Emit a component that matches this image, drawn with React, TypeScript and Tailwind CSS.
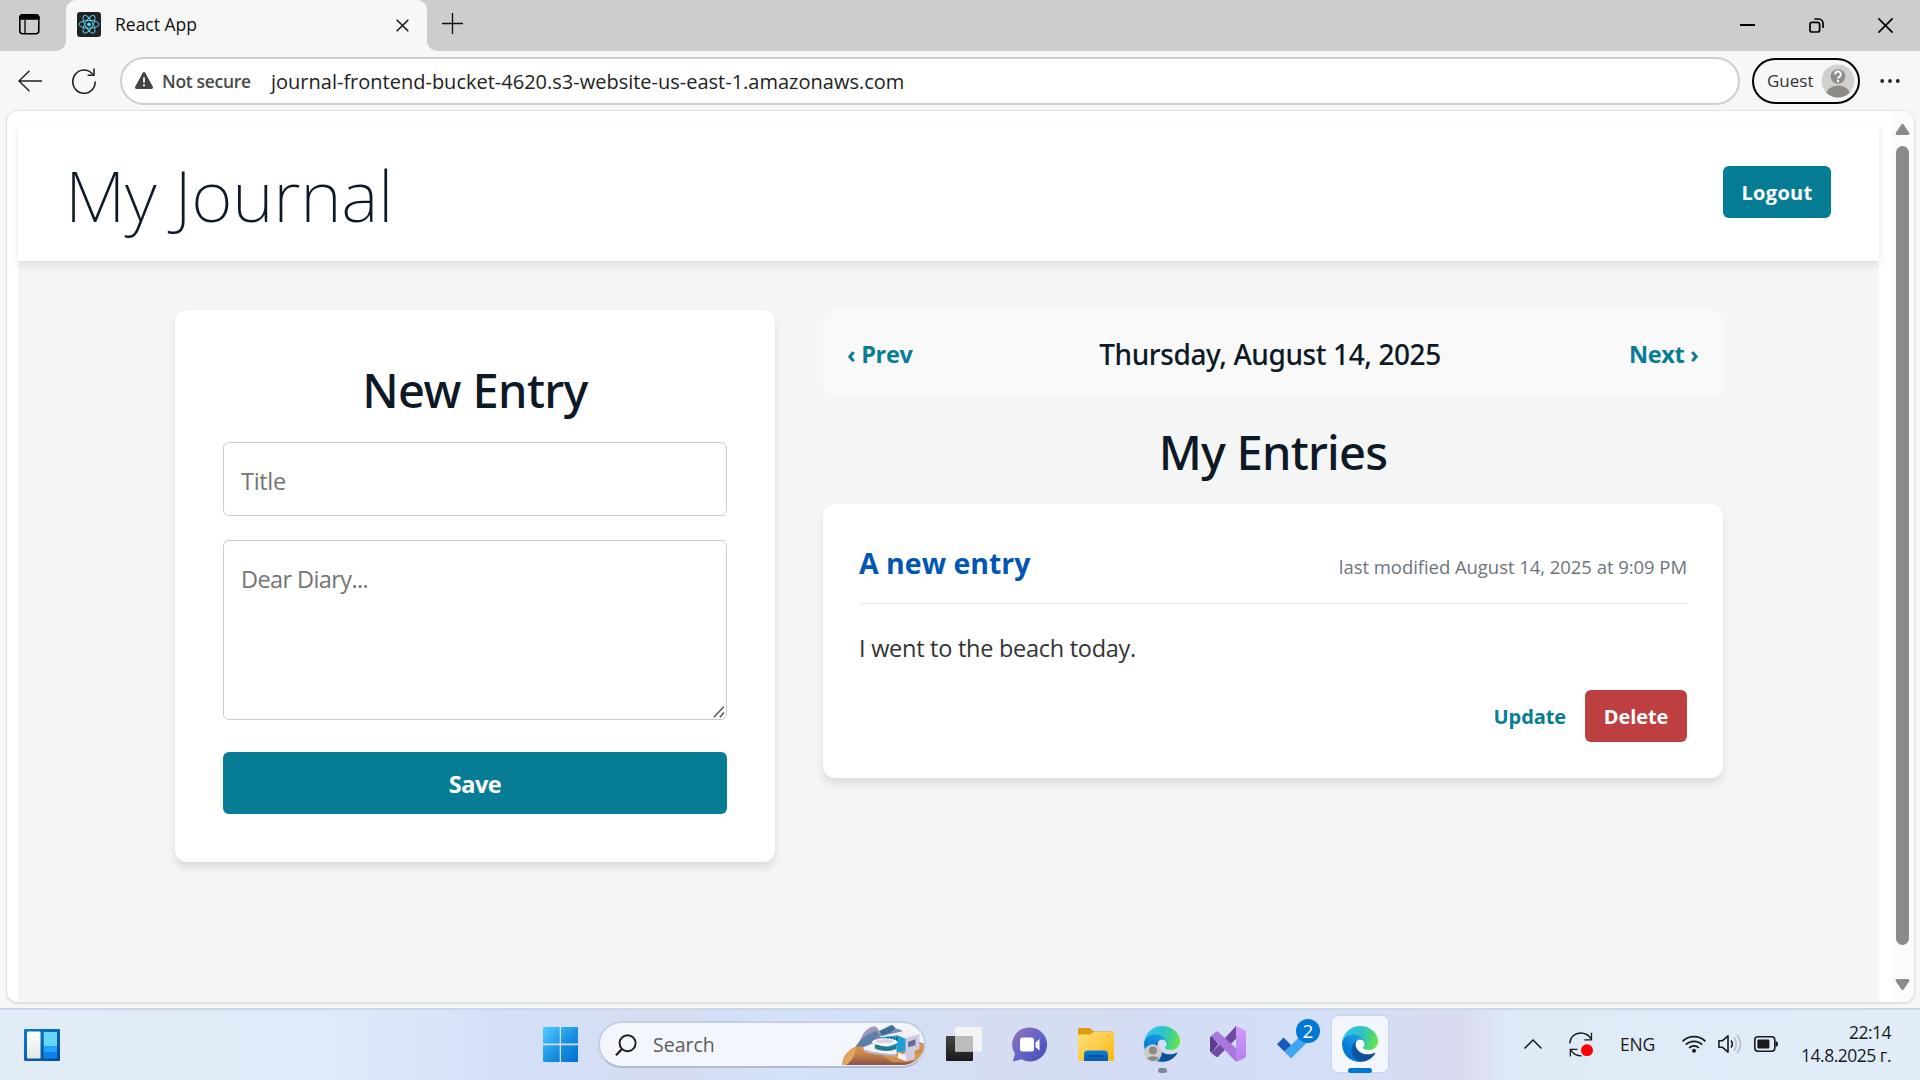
import type { ReactNode } from "react";

function ReactLogo() {
  return (
    <svg viewBox="0 0 24 25" className="h-[25px] w-6">
      <rect width="24" height="25" rx="3" fill="#222" />
      <g fill="none" stroke="#61dafb" strokeWidth="0.9" transform="translate(12 12.3)">
        <ellipse rx="10" ry="3.9" />
        <ellipse rx="10" ry="3.9" transform="rotate(60)" />
        <ellipse rx="10" ry="3.9" transform="rotate(120)" />
        <circle r="1.9" fill="#61dafb" stroke="none" />
      </g>
    </svg>
  );
}

function TabStrip() {
  return (
    <div className="flex h-[51px] shrink-0 bg-[#f7f7f7]">
      <div className="w-[66px] rounded-br-[10px] bg-[#cdcdcd] pt-[13px] pl-[18px]">
        <svg viewBox="0 0 22 22" className="size-[22px]" fill="none" stroke="#000" strokeWidth="1.6">
          <rect x="1.8" y="1.8" width="19" height="19" rx="3" />
          <path d="M2 4.5a2.6 2.6 0 0 1 2.6-2.6h13.6a2.6 2.6 0 0 1 2.6 2.6V6H2z" fill="#000" />
          <path d="M7 6.5v14" strokeWidth="1.3" />
        </svg>
      </div>
      <div className="w-[361px] bg-[#cdcdcd]">
        <div className="flex h-full items-center rounded-t-[10px] bg-[#f7f7f7] pr-[18px] pb-[2px] pl-[11px]">
          <ReactLogo />
          <span className="ml-[14px] flex-1 text-[17.5px] text-[#111]">React App</span>
          <svg viewBox="0 0 13 13" className="mt-[2px] size-[13px]" stroke="#111" strokeWidth="1.5">
            <path d="M.7.7l11.6 11.6M12.3.7L.7 12.3" />
          </svg>
        </div>
      </div>
      <div className="flex flex-1 rounded-bl-[10px] bg-[#cdcdcd] pl-[15px]">
        <svg viewBox="0 0 22 22" className="mt-[13px] size-[21px]" stroke="#111" strokeWidth="1.4">
          <path d="M11 0v22M0 11h22" />
        </svg>
        <div className="ml-auto flex gap-[54px] pt-[18px] pr-[27px]">
          <svg viewBox="0 0 15 15" className="size-[15px]">
            <path d="M0 7h15" stroke="#000" strokeWidth="2" />
          </svg>
          <svg viewBox="0 0 15 15" className="size-[15px]" fill="none" stroke="#000" strokeWidth="1.7">
            <rect x="1" y="4.4" width="9.6" height="9.6" rx="2" />
            <path d="M5.3 1h4.4A4.3 4.3 0 0 1 14 5.3v4.6" />
          </svg>
          <svg viewBox="0 0 15 15" className="size-[15px]" stroke="#000" strokeWidth="1.7">
            <path d="M.4.4l14.2 14.2M14.6.4L.4 14.6" />
          </svg>
        </div>
      </div>
    </div>
  );
}

function AddressBar() {
  return (
    <div className="flex h-[59px] shrink-0 items-center bg-[#f7f7f7]">
      <svg viewBox="0 0 24 22" className="ml-[18px] h-[22px] w-6" fill="none" stroke="#222" strokeWidth="1.5">
        <path d="M24 11H1M11.5.8L1 11l10.5 10.2" />
      </svg>
      <svg viewBox="0 0 24 26" className="mt-px ml-[30px] h-[26px] w-6" fill="none" stroke="#222" strokeWidth="1.6">
        <path d="M23.2 13.6A11.2 11.7 0 1 1 20.8 6.4" />
        <path d="M15.6 7.2h6.4V.6" />
      </svg>
      <div className="mt-px ml-6 flex h-12 w-[1620px] items-center rounded-full border-2 border-[#cfcfcf] bg-white pl-[13px]">
        <svg viewBox="0 0 18 17" className="-mt-[2px] h-[17px] w-[18px]">
          <path d="M7.6.9a1.6 1.6 0 0 1 2.8 0l7.3 13.6A1.6 1.6 0 0 1 16.3 17H1.7A1.6 1.6 0 0 1 .3 14.5z" fill="#444" />
          <path d="M9 5.2v5.6" stroke="#fff" strokeWidth="1.7" />
          <circle cx="9" cy="13.4" r="1.1" fill="#fff" />
        </svg>
        <span className="ml-[9px] w-[89px] text-[17.5px] font-semibold tracking-[-0.32px] whitespace-nowrap text-[#4a4a4a]">
          Not secure
        </span>
        <span className="ml-5 pt-px text-[20px] text-[#222]">
          journal-frontend-bucket-4620.s3-website-us-east-1.amazonaws.com
        </span>
      </div>
      <div className="ml-3 flex h-[46px] w-[108px] items-center justify-between rounded-full border-2 border-black pr-[3px] pl-[13px]">
        <span className="pt-px text-[17px] text-[#333]">Guest</span>
        <svg viewBox="0 0 34 34" className="size-[34px]">
          <defs>
            <clipPath id="guest">
              <circle cx="17" cy="17" r="16.5" />
            </clipPath>
          </defs>
          <circle cx="17" cy="17" r="16.5" fill="#d2d0cd" />
          <g clipPath="url(#guest)" fill="#8f8b88">
            <circle cx="17" cy="12.5" r="7.3" />
            <ellipse cx="17" cy="31" rx="12" ry="9.5" />
          </g>
          <path d="M14.2 10.4a2.8 2.8 0 1 1 4.2 2.3c-1 .6-1.4 1-1.4 2" fill="none" stroke="#fff" strokeWidth="1.9" />
          <circle cx="17" cy="17" r="1.2" fill="#fff" />
        </svg>
      </div>
      <svg viewBox="0 0 20 4" className="mt-px ml-[20px] h-1 w-5" fill="#222">
        <circle cx="2.2" cy="2" r="1.9" />
        <circle cx="10" cy="2" r="1.9" />
        <circle cx="17.8" cy="2" r="1.9" />
      </svg>
    </div>
  );
}

function NewEntryForm() {
  return (
    <form className="h-[552px] w-[600px] rounded-xl bg-white p-12 shadow-[0_6px_9px_rgba(0,0,0,0.1)]">
      <h2 className="h-[84px] text-center font-['Noto_Sans'] text-[47px] leading-[64px] font-medium tracking-[-0.6px]">
        New Entry
      </h2>
      <input
        placeholder="Title"
        className="block h-[74px] w-full rounded-md border border-[#ccc] px-[17px] pt-[3px] text-[23.5px] tracking-[-0.3px] placeholder:text-[#757575]"
      />
      <div className="relative mt-6 h-[180px]">
        <textarea
          placeholder="Dear Diary..."
          className="block h-full w-full resize-none rounded-md border border-[#ccc] px-[17px] pt-[21px] text-[23.5px] leading-[34px] tracking-[-0.6px] placeholder:text-[#757575]"
        />
        <svg viewBox="0 0 12 12" className="absolute right-[2px] bottom-[2px] size-3" stroke="#555" strokeWidth="1.5">
          <path d="M.8 11.2L10.8.8M6.8 11.2l4.2-4.6" />
        </svg>
      </div>
      <button className="mt-8 h-[62px] w-full rounded-md bg-[#067d95] pt-[3px] text-[23.5px] font-bold tracking-[-0.5px] text-white">
        Save
      </button>
    </form>
  );
}

function Entries() {
  return (
    <section className="w-[900px]">
      <nav className="flex h-[86px] items-center justify-between rounded-xl bg-[#f9f9f9] px-6 pt-[2px]">
        <button className="w-16 pt-[2px] text-left text-[23.5px] font-bold tracking-[-0.3px] whitespace-nowrap text-[#067d95]">
          ‹ Prev
        </button>
        <span className="font-['Noto_Sans'] text-[28px] font-medium tracking-[-0.4px]">Thursday, August 14, 2025</span>
        <button className="w-[70px] pt-[2px] text-left text-[23.5px] font-bold tracking-[-0.4px] whitespace-nowrap text-[#067d95]">
          Next ›
        </button>
      </nav>
      <h2 className="h-[108px] pt-[2px] text-center font-['Noto_Sans'] text-[47px] leading-[108px] font-medium tracking-[-0.75px]">
        My Entries
      </h2>
      <article className="h-[274px] rounded-xl bg-white px-9 pt-9 shadow-[0_6px_9px_rgba(0,0,0,0.1)]">
        <header className="flex h-16 items-baseline justify-between border-b border-[#e9ecef]">
          <h3 className="text-[28.5px] leading-[47px] font-bold text-[#0056b3]">A new entry</h3>
          <span className="text-[18.5px] tracking-[-0.05px] text-[#6c757d]">last modified August 14, 2025 at 9:09 PM</span>
        </header>
        <p className="mt-[26px] text-[23.5px] leading-[36px] tracking-[-0.27px] text-[#333]">I went to the beach today.</p>
        <div className="mt-6 flex justify-end">
          <button className="h-[52px] px-[19px] pt-[2px] text-[20px] font-bold tracking-[-0.1px] text-[#067d95]">Update</button>
          <button className="h-[52px] w-[102px] rounded-md bg-[#bd3f40] pt-[2px] text-[20px] font-bold tracking-[-0.1px] text-white">
            Delete
          </button>
        </div>
      </article>
    </section>
  );
}

function Page() {
  return (
    <div className="h-[898px] shrink-0 bg-[#f7f7f7] pr-[5px] pb-[5px] pl-[6px]">
      <div className="flex h-full overflow-hidden rounded-xl border border-[#e2e2e2] bg-white pt-[11px] pl-[11px] shadow-[0_1px_2px_rgba(0,0,0,0.12)]">
        <div className="flex w-[1861px] shrink-0 flex-col bg-[#f4f6f6] text-[#0d1926]">
          <header className="z-10 flex h-[139px] shrink-0 items-center justify-between bg-white px-12 shadow-[0_4px_8px_rgba(0,0,0,0.1)]">
            <h1 className="-ml-px pt-[5px] font-['Noto_Sans'] text-[71px] leading-none font-extralight tracking-[-0.3px]">
              My Journal
            </h1>
            <button className="h-[52px] w-[108px] rounded-md bg-[#067d95] pt-[2px] text-[20px] font-bold tracking-[0.3px] text-white">
              Logout
            </button>
          </header>
          <main className="flex gap-12 pt-[49px] pl-[157px]">
            <NewEntryForm />
            <Entries />
          </main>
        </div>
        <div className="-mt-[11px] ml-3 flex w-[23px] flex-col items-center bg-[#fbfbfb] pt-[13px] pb-[12px]">
          <svg viewBox="0 0 15 11" className="h-[11px] w-[15px] shrink-0" fill="#8b8b8b">
            <path d="M6.2.7a1.6 1.6 0 0 1 2.6 0l5.4 8a1.4 1.4 0 0 1-1.2 2.2H2A1.4 1.4 0 0 1 .8 8.7z" />
          </svg>
          <div className="mt-[11px] h-[799px] w-[13px] rounded-full bg-[#8b8b8b]" />
          <svg viewBox="0 0 15 11" className="mt-auto h-[11px] w-[15px] shrink-0 rotate-180" fill="#8b8b8b">
            <path d="M6.2.7a1.6 1.6 0 0 1 2.6 0l5.4 8a1.4 1.4 0 0 1-1.2 2.2H2A1.4 1.4 0 0 1 .8 8.7z" />
          </svg>
        </div>
      </div>
    </div>
  );
}

function EdgeIcon({ id }: { id: string }) {
  return (
    <svg viewBox="0 0 256 256" className="size-9">
      <defs>
        <linearGradient id={`${id}a`} x1="60" y1="180" x2="240" y2="180" gradientUnits="userSpaceOnUse">
          <stop offset="0" stopColor="#0c59a4" />
          <stop offset="1" stopColor="#114a8b" />
        </linearGradient>
        <linearGradient id={`${id}b`} x1="150" y1="80" x2="45" y2="210" gradientUnits="userSpaceOnUse">
          <stop offset="0" stopColor="#1b9de2" />
          <stop offset="0.3" stopColor="#1595df" />
          <stop offset="0.7" stopColor="#0680d7" />
          <stop offset="1" stopColor="#0078d4" />
        </linearGradient>
        <linearGradient id={`${id}c`} x1="20" y1="60" x2="255" y2="130" gradientUnits="userSpaceOnUse">
          <stop offset="0" stopColor="#35c1f1" />
          <stop offset="0.45" stopColor="#2cc3c8" />
          <stop offset="0.72" stopColor="#43d08c" />
          <stop offset="1" stopColor="#66eb3e" />
        </linearGradient>
      </defs>
      <g transform="translate(-4.63 -4.92)">
        <path fill={`url(#${id}a)`} d="M235.68 195.46a93.73 93.73 0 0 1-10.54 4.71 101.87 101.87 0 0 1-35.9 6.46c-47.32 0-88.54-32.55-88.54-74.32A31.48 31.48 0 0 1 117.13 105c-42.8 1.8-53.8 46.4-53.8 72.53 0 73.88 68.09 81.37 82.76 81.37 7.91 0 19.84-2.3 27-4.56l1.31-.44a128.34 128.34 0 0 0 66.6-52.8 4 4 0 0 0-5.32-5.64z" />
        <path fill={`url(#${id}b)`} d="M110.34 246.34A79.2 79.2 0 0 1 87.6 225a80.72 80.72 0 0 1 29.53-120c3.12-1.47 8.45-4.13 15.54-4a32.35 32.35 0 0 1 25.69 13 31.88 31.88 0 0 1 6.36 18.66c0-.21 24.46-79.6-80-79.6-43.9 0-80 41.66-80 78.21a130.15 130.15 0 0 0 12.11 56 128 128 0 0 0 156.38 67.11 75.55 75.55 0 0 1-62.78-8z" />
        <path fill={`url(#${id}c)`} d="M156.94 153.78c-.81 1.05-3.3 2.5-3.3 5.66 0 2.61 1.7 5.12 4.72 7.23 14.38 10 41.49 8.68 41.56 8.68a59.56 59.56 0 0 0 30.27-8.35 61.38 61.38 0 0 0 30.43-52.88c.26-22.41-8-37.31-11.34-43.91C228.09 28.76 182.35 4.92 132.61 4.92a128 128 0 0 0-128 126.2c.48-36.54 36.8-66.05 80-66.05 3.5 0 23.46.34 42 10.07 16.34 8.58 24.9 18.94 30.85 29.21 6.18 10.67 7.28 24.15 7.28 29.52s-2.74 13.33-7.8 19.91z" />
      </g>
    </svg>
  );
}

function SearchArt() {
  return (
    <svg viewBox="970 78 248 120" className="-mr-px h-10 w-[83px]">
      <defs>
        <linearGradient id="dune" x1="0" y1="0" x2="0" y2="1">
          <stop offset="0" stopColor="#e0a255" />
          <stop offset="0.5" stopColor="#c98445" />
          <stop offset="1" stopColor="#8a4f4c" />
        </linearGradient>
        <linearGradient id="peak" x1="0" y1="0" x2="1" y2="1">
          <stop offset="0" stopColor="#c9a3c4" />
          <stop offset="0.5" stopColor="#6f86b0" />
          <stop offset="1" stopColor="#5b7fae" />
        </linearGradient>
        <clipPath id="pillEnd">
          <path d="M970 70H1150A66 64 0 0 1 1150 198H970z" />
        </clipPath>
      </defs>
      <g clipPath="url(#pillEnd)">
        <path d="M1000 158c14-20 22-30 30-48 8-14 22-28 40-28l12 14 20-10 10-6 8-2 10 10 16 4 10 10 20 4 20 20 20 10v30z" fill="url(#peak)" />
        <path d="M1082 96l20-10 18-8 10 10-14 12-26 12z" fill="#3f6d94" />
        <path d="M1008 146c10-14 24-30 40-40l24-10 8 14-24 20-14 18z" fill="#4c7ba6" opacity=".75" />
        <path d="M970 198c2-24 14-42 38-54 40-6 60 12 90 14 50 2 80-20 120-26v66z" fill="url(#dune)" />
        <path d="M970 198c4-26 18-44 40-52 2 16-10 40-28 52z" fill="#e3a75c" />
        <path d="M1090 170c40-2 70 4 120-10l-10 20-30 10h-50z" fill="#e5a94f" opacity=".6" />
        <path d="M1088 110l74-14v60l-30 4-44-16z" fill="#1f9fd0" />
        <path d="M1104 114h32v14h-32z" fill="#12558f" />
        <path d="M1112 112v18M1121 112v18M1129 112v18" stroke="#7fd3f0" strokeWidth="2" />
        <path d="M1084 112l84-19 34 12-42 14-24-10-50 6z" fill="#f1eef6" />
        <path d="M1160 119l42-14v44l-14 8v24l-26 6-24-10 22-18z" fill="#cfcadd" />
        <path d="M1168 128l22-7v18l-22 6z" fill="#6a6d97" />
        <path d="M1138 160l24 10v16l-26-10z" fill="#f4f1f8" />
        <path d="M1034 144l32-12 66 10 2 24-22 2-50-8-28-8z" fill="#f2eff7" />
        <path d="M1036 152l30 8 66 8v5l-66-7-30-7z" fill="#b9b2cc" />
        <path d="M1068 132c16 12 48 14 64 4v14c-16 8-48 8-64-2z" fill="#1b7f90" />
        <ellipse cx="1098" cy="129" rx="38" ry="11" fill="#fbf9fd" />
        <ellipse cx="1098" cy="127" rx="28" ry="6" fill="#d8d2e6" />
      </g>
    </svg>
  );
}

function Cell({ children }: { children: ReactNode }) {
  return <div className="relative flex size-14 items-center justify-center">{children}</div>;
}

function Taskbar() {
  return (
    <footer className="flex h-[72px] shrink-0 border-t-2 border-[#cbd7e8] bg-[linear-gradient(90deg,#e2ecf6_0%,#dfebf9_17%,#d3e0f8_26%,#d6dcf2_35%,#d2e2f8_41%,#d6ddf2_52%,#d3dcf4_60%,#d3dff8_69%,#d9dbef_76%,#dfeaf7_79%,#e0edf9_100%)]">
      <div className="w-[532px] pt-[19px] pl-6">
        <svg viewBox="0 0 36 32" className="h-8 w-9">
          <defs>
            <linearGradient id="board" x1="0" y1="0" x2="1" y2="1">
              <stop offset="0" stopColor="#0a7ad2" />
              <stop offset="1" stopColor="#0a4a92" />
            </linearGradient>
            <linearGradient id="sheet" x1="0" y1="0" x2="0" y2="1">
              <stop offset="0" stopColor="#fff" />
              <stop offset="1" stopColor="#e6e6e6" />
            </linearGradient>
          </defs>
          <rect width="36" height="32" rx="1" fill="url(#board)" />
          <rect x="3" y="2.5" width="13.5" height="27" rx="1.2" fill="url(#sheet)" />
          <path d="M19.7 3H33v14H19.7z" fill="#66d8ff" />
          <path d="M19.7 17H33v6H19.7z" fill="#1fa5fb" />
          <path d="M19.7 23H33v6.5H19.7z" fill="#0a84ec" />
        </svg>
      </div>
      <div className="flex items-center gap-[10px] pb-[2px]">
        <Cell>
          <svg viewBox="0 0 35 35" className="size-[35px]">
            <defs>
              <linearGradient id="win" x1="0" y1="0" x2="35" y2="35" gradientUnits="userSpaceOnUse">
                <stop offset="0" stopColor="#4fcfff" />
                <stop offset="0.55" stopColor="#1b8fe0" />
                <stop offset="1" stopColor="#0070cf" />
              </linearGradient>
            </defs>
            <path d="M0 .8A.8.8 0 0 1 .8 0h15.9v16.6H0zM18 0h16.2a.8.8 0 0 1 .8.8v15.8H18zM0 18.2h16.7V35H.8a.8.8 0 0 1-.8-.8zM18 18.2h17v16a.8.8 0 0 1-.8.8H18z" fill="url(#win)" />
          </svg>
        </Cell>
        <div className="mt-px flex h-[47px] w-[328px] items-center rounded-full border-2 border-[#c5cfe4] border-b-[#b0bbcf] bg-[#f3f6fd] pl-[15px]">
          <svg viewBox="0 0 22 22" className="size-[22px]" fill="none" stroke="#1f1f1f" strokeWidth="1.9">
            <circle cx="12.6" cy="9.2" r="8" />
            <path d="M6.8 15.2L1 21.2" strokeWidth="2.3" />
          </svg>
          <span className="ml-4 flex-1 pt-px text-[19.5px] text-[#5c5c5c]">Search</span>
          <SearchArt />
        </div>
        <Cell>
          <svg viewBox="0 0 36 34" className="h-[34px] w-9">
            <defs>
              <linearGradient id="dark" x1="0" y1="0" x2="0" y2="1">
                <stop offset="0" stopColor="#444" />
                <stop offset="1" stopColor="#1a1a1a" />
              </linearGradient>
            </defs>
            <rect y="9" width="27" height="25" rx="1" fill="url(#dark)" />
            <rect x="9" width="27" height="24.5" rx="1" fill="#f4f4f4" />
            <path d="M9 9h18v15.5H9z" fill="#bcbcbc" />
          </svg>
        </Cell>
        <Cell>
          <svg viewBox="0 0 35 35" className="mr-[2px] size-[35px]">
            <defs>
              <linearGradient id="chat" x1="0" y1="0.2" x2="0.8" y2="1">
                <stop offset="0" stopColor="#9070b8" />
                <stop offset="0.5" stopColor="#6264c8" />
                <stop offset="1" stopColor="#4b50b8" />
              </linearGradient>
            </defs>
            <path d="M18 .5a17 17 0 1 1-8.5 31.7L.8 34.6 3 26.8A17 17 0 0 1 18 .5z" fill="url(#chat)" />
            <rect x="8" y="10.5" width="14" height="14" rx="2.5" fill="#fff" />
            <path d="M23.500 15.500l4-3.500v11.500l-4-3.500z" fill="#fff" />
          </svg>
        </Cell>
        <Cell>
          <svg viewBox="0 0 36 33" className="h-[33px] w-9">
            <defs>
              <linearGradient id="folder" x1="0" y1="0" x2="1" y2="1">
                <stop offset="0" stopColor="#ffdf7c" />
                <stop offset="1" stopColor="#fbb812" />
              </linearGradient>
              <linearGradient id="tray" x1="0" y1="0" x2="0" y2="1">
                <stop offset="0" stopColor="#0a80d8" />
                <stop offset="1" stopColor="#0a5cab" />
              </linearGradient>
            </defs>
            <path d="M0 1.5A1.5 1.5 0 0 1 1.5 0h9.300c.8 0 1.300.2 2 .8L15.500 3.500H34.500a1.500 1.500 0 0 1 1.500 1.500v6H0z" fill="#dd9d08" />
            <path d="M0 6.500h11c1.500 0 2-.5 3-1.300 1-.9 1.500-1.200 3-1.200h19v27.500a1.500 1.500 0 0 1-1.500 1.500h-33A1.500 1.500 0 0 1 0 31.500z" fill="url(#folder)" />
            <path d="M6 33v-6.500a4 4 0 0 1 4-4h16a4 4 0 0 1 4 4V33z" fill="url(#tray)" />
            <path d="M11 28h14" stroke="#0b4a85" strokeWidth="1.6" />
          </svg>
        </Cell>
        <Cell>
          <EdgeIcon id="edgeGuest" />
          <svg viewBox="0 0 18 18" className="absolute bottom-[10px] left-[10px] size-[18px]">
            <circle cx="9" cy="9" r="8.8" fill="#cfcdca" />
            <circle cx="9" cy="6.6" r="4" fill="#8d8a87" />
            <path d="M3.400 14.600c1.400-3.200 9.800-3.200 11.200 0a8 8 0 0 1-11.200 0z" fill="#8d8a87" />
          </svg>
          <span className="absolute -bottom-[1px] left-[23.5px] h-[5px] w-[9px] rounded-full bg-[#7f8694]" />
        </Cell>
        <Cell>
          <svg viewBox="0 0 108 108" className="size-9">
            <defs>
              <linearGradient id="vs" x1="0" y1="0" x2="0" y2="1">
                <stop offset="0" stopColor="#d49cff" />
                <stop offset="1" stopColor="#b57fec" />
              </linearGradient>
            </defs>
            <path d="M0 36a5 5 0 0 1 2-4l3-2 20 24-20 26-3-2a5 5 0 0 1-2-4z" fill="#5c3a8e" />
            <path d="M4 81L78 0v38L24 92a5 5 0 0 1-6 0z" fill="#7049a5" />
            <path d="M4 29l14-12a5 5 0 0 1 6 0L84 72l-6 36z" fill="#a777dd" />
            <path d="M78 0l26 12a6 6 0 0 1 4 6v72a6 6 0 0 1-4 6l-26 12z" fill="url(#vs)" />
          </svg>
        </Cell>
        <Cell>
          <svg viewBox="0 0 30 22" className="mt-2 mr-1 h-[22px] w-[30px]">
            <path d="M0 7.200L6.600.6l7.600 7.600-6.600 6.600z" fill="#195abd" />
            <path d="M7.600 14.700L22 .3h8v5.200L14 21.500z" fill="#40a4ee" />
          </svg>
          <span className="absolute top-[3px] left-[30px] flex size-6 items-center justify-center rounded-full bg-[#0078d4] text-[19px] leading-none text-white">
            2
          </span>
        </Cell>
        <div className="relative flex size-14 items-center justify-center rounded-md bg-[#f3f6fd] shadow-[0_0_1px_1px_rgba(170,180,205,0.25)]">
          <EdgeIcon id="edge" />
          <span className="absolute -bottom-[1px] left-4 h-[5px] w-6 rounded-full bg-[#0078d4]" />
        </div>
      </div>
      <div className="ml-auto flex items-center pr-[29px] pb-px text-[17.5px] text-[#1a1a1a]">
        <svg viewBox="0 0 18 10" className="-mt-[2px] h-[10px] w-[18px]" fill="none" stroke="#1a1a1a" strokeWidth="1.5">
          <path d="M.5 9.500L9 1l8.500 8.500" />
        </svg>
        <svg viewBox="0 0 24 25" className="ml-[27px] h-[25px] w-6" fill="none" stroke="#1a1a1a" strokeWidth="1.3">
          <path d="M.8 11.500C1 5 6 1 11.500 1c4.500 0 8.500 2.200 10.800 6M22.500.8v7h-7.200" />
          <path d="M1.300 24.500v-7.200h7.200M1.600 17.600c2 3.700 6 6.200 11 6.200" />
          <circle cx="18" cy="18.300" r="6" fill="#f00" stroke="none" />
        </svg>
        <span className="ml-[27px] w-[35px] tracking-[-0.2px]">ENG</span>
        <svg viewBox="0 0 24 18" className="-mt-px ml-[27px] h-[18px] w-6" fill="none" stroke="#1a1a1a" strokeWidth="1.7">
          <path d="M.6 6.400a16.100 16.100 0 0 1 22.800 0M3.800 9.700a11.600 11.600 0 0 1 16.400 0M7.100 12.900a7 7 0 0 1 9.800 0" />
          <circle cx="12" cy="15.700" r="2" fill="#1a1a1a" stroke="none" />
        </svg>
        <svg viewBox="0 0 25 20" className="-mt-px ml-3 h-5 w-[25px]" fill="none" stroke="#1a1a1a" strokeWidth="1.6">
          <path d="M.9 6.700h3.600L10 1.800v16.400l-5.500-4.900H.9z" strokeLinejoin="round" />
          <path d="M13 6.400c1.500 2 1.500 5.200 0 7.200" />
          <path d="M16 3.600c3 3.600 3 9.200 0 12.800M19 1c4.600 5 4.600 13 0 18" stroke="#b4bcc6" />
        </svg>
        <svg viewBox="0 0 24 16" className="-mt-px ml-[11px] h-4 w-6" fill="none" stroke="#1a1a1a" strokeWidth="1.6">
          <rect x=".8" y=".8" width="20" height="14.4" rx="3.2" />
          <rect x="3.4" y="3.6" width="12" height="8.8" rx="1" fill="#1a1a1a" stroke="none" />
          <path d="M21.500 5.200h.6a1.900 2.800 0 0 1 0 5.600h-.6z" fill="#1a1a1a" stroke="none" />
        </svg>
        <div className="-mt-px ml-[22px] w-[91px] text-right leading-[23.5px] tracking-[-0.5px]">
          <div>22:14</div>
          <div className="whitespace-nowrap">14.8.2025 г.</div>
        </div>
      </div>
    </footer>
  );
}

export default function App() {
  return (
    <div className="flex h-[1080px] w-[1920px] flex-col overflow-hidden font-['Open_Sans','Noto_Sans',sans-serif]">
      <TabStrip />
      <AddressBar />
      <Page />
      <Taskbar />
    </div>
  );
}
